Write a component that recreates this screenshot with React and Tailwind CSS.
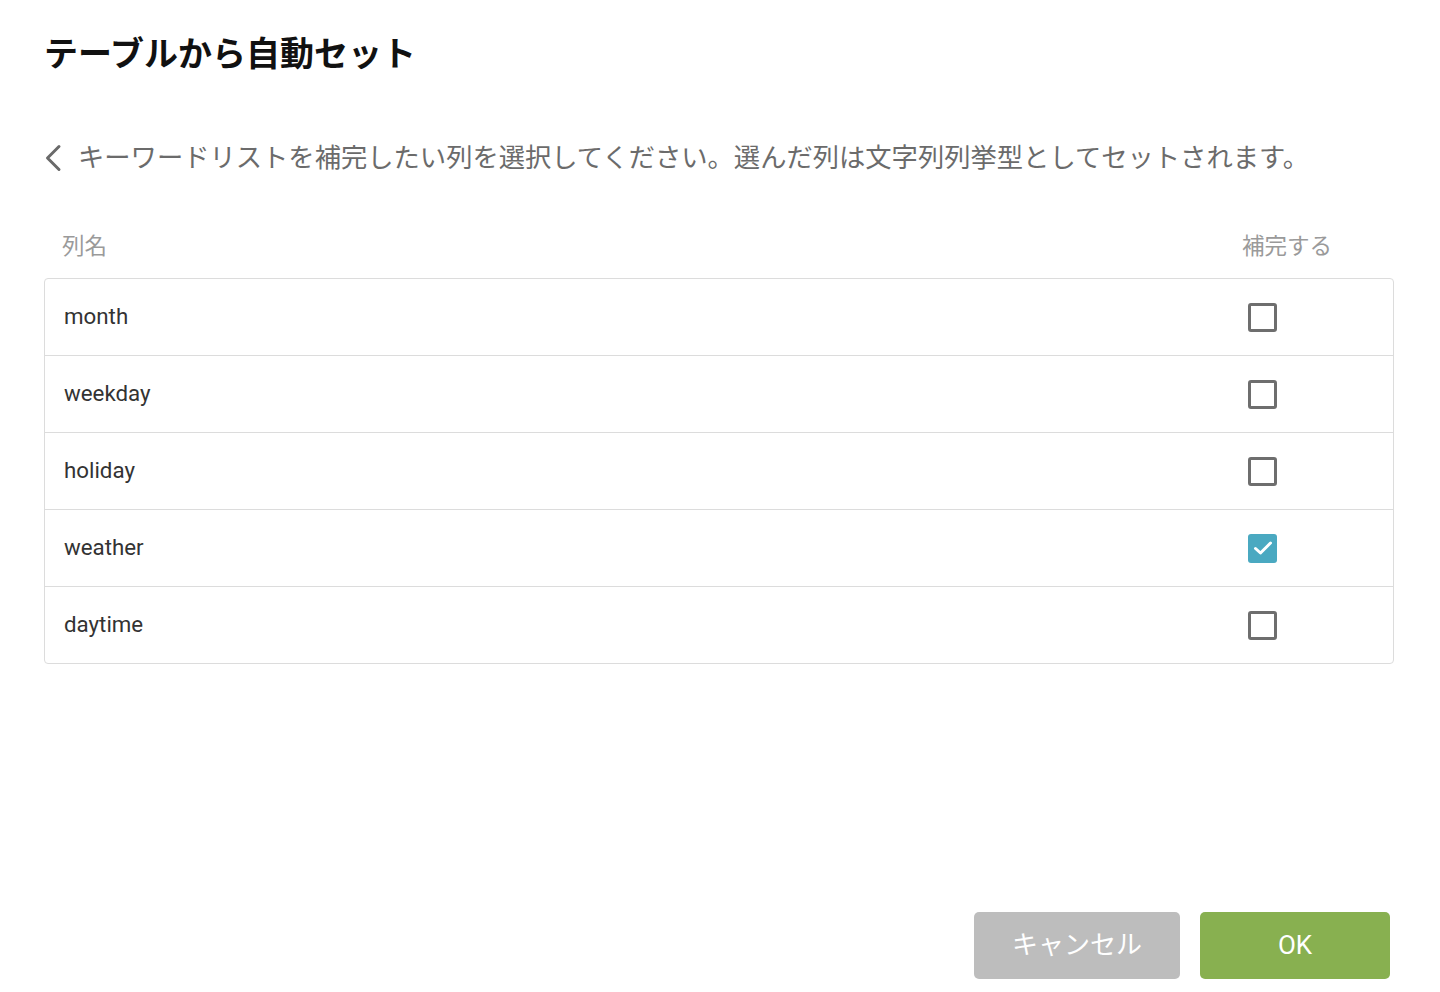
import React, { useState } from 'react';

const columns = ['month', 'weekday', 'holiday', 'weather', 'daytime'];

const Checkbox = ({ checked, onChange }) => (
  <button
    type="button"
    onClick={onChange}
    className={
      checked
        ? 'w-[29px] h-[29px] rounded-[3px] bg-[#4aa9c1] flex items-center justify-center'
        : 'w-[29px] h-[29px] rounded-[3px] border-[3px] border-[#6e6e6e] bg-white'
    }
  >
    {checked && (
      <svg width="20" height="16" viewBox="0 0 20 16" fill="none">
        <path d="M2.5 8.5 L7.5 13 L17.5 3" stroke="white" strokeWidth="3" strokeLinecap="round" strokeLinejoin="round" />
      </svg>
    )}
  </button>
);

const App = () => {
  const [selected, setSelected] = useState({ weather: true });

  const toggle = (name) => setSelected((s) => ({ ...s, [name]: !s[name] }));

  return (
    <div
      className="h-screen w-full bg-white flex flex-col pl-[44px] pr-[46px]"
      style={{ fontFamily: 'Roboto, "Noto Sans CJK JP", sans-serif' }}
    >
      <h1 className="pt-[34px] text-[34px] leading-[40px] font-bold text-[#111]">テーブルから自動セット</h1>

      <div className="mt-[66px] flex items-center h-[36px]">
        <svg width="18" height="28" viewBox="0 0 18 28" fill="none" className="mr-[16px]">
          <path d="M15 2.5 L3.5 14 L15 25.5" stroke="#6a6a6a" strokeWidth="3" strokeLinecap="round" strokeLinejoin="round" />
        </svg>
        <p className="text-[26.3px] leading-[36px] text-[#6b6b6b] whitespace-nowrap">
          キーワードリストを補完したい列を選択してください。選んだ列は文字列列挙型としてセットされます。
        </p>
      </div>

      <div className="mt-[55px] flex justify-between pl-[18px] pr-[62px] text-[22.5px] leading-[30px] text-[#9a9a9a]">
        <span>列名</span>
        <span>補完する</span>
      </div>

      <div className="mt-[17px] border border-[#dcdcdc] rounded-[4px]">
        {columns.map((name, i) => (
          <div
            key={name}
            className={
              i === 0
                ? 'h-[76px] flex items-center justify-between pl-[19px] pr-[116px]'
                : 'h-[77px] border-t border-[#dcdcdc] flex items-center justify-between pl-[19px] pr-[116px]'
            }
          >
            <span className="text-[22.3px] text-[#333]">{name}</span>
            <Checkbox checked={!!selected[name]} onChange={() => toggle(name)} />
          </div>
        ))}
      </div>

      <div className="mt-auto mb-[13px] flex justify-end gap-[20px] pr-[4px]">
        <button className="w-[206px] h-[67px] rounded-[5px] bg-[#bdbdbd] text-white text-[26px]">キャンセル</button>
        <button className="w-[190px] h-[67px] rounded-[5px] bg-[#88b050] text-white text-[26px]">OK</button>
      </div>
    </div>
  );
};

export default App;
